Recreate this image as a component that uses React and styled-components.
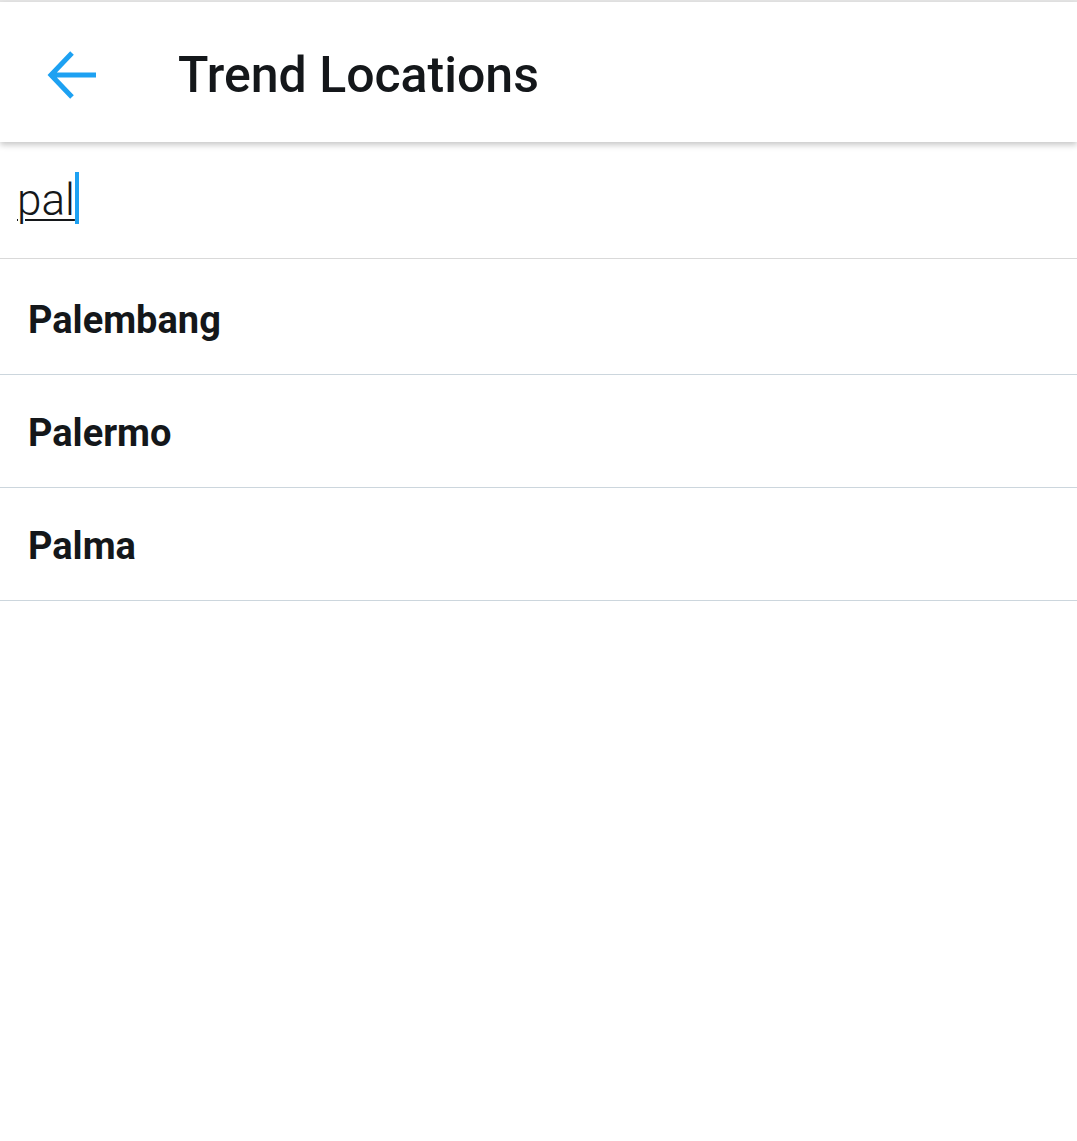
import React from 'react';
import styled, { createGlobalStyle } from 'styled-components';

const GlobalStyle = createGlobalStyle`
  html, body {
    margin: 0;
    padding: 0;
    background: #ffffff;
  }
  body {
    font-family: Roboto, "Noto Sans", "Liberation Sans", sans-serif;
    color: #14171a;
  }
`;

const Page = styled.div`
  width: 100%;
  min-height: 1141px;
  background: #fff;
  border-top: 2px solid #e6e6e6;
  box-sizing: border-box;
`;

const Header = styled.header`
  height: 140px;
  padding-top: 5px;
  box-sizing: border-box;
  display: flex;
  align-items: center;
  position: relative;
  z-index: 1;
  background: #fff;
  box-shadow: 0 3px 6px rgba(0, 0, 0, 0.22);
`;

const BackButton = styled.button`
  width: 178px;
  height: 100%;
  padding: 0 0 0 46px;
  border: 0;
  background: none;
  display: flex;
  align-items: center;
  justify-content: flex-start;
  cursor: pointer;
`;

const Title = styled.h1`
  margin: 0;
  font-size: 50px;
  font-weight: 500;
  letter-spacing: 0;
  color: #14171a;
`;

const SearchRow = styled.div`
  height: 117px;
  box-sizing: border-box;
  display: flex;
  align-items: center;
  padding: 0 17px;
  border-bottom: 1px solid #d9d9d9;
`;

const Query = styled.span`
  font-size: 44px;
  font-weight: 300;
  color: #14171a;
  text-decoration: underline;
  text-decoration-thickness: 2px;
  text-underline-offset: 4px;
  line-height: 1;
`;

const Caret = styled.span`
  display: inline-block;
  width: 4px;
  height: 52px;
  background: #1da1f2;
  margin-top: -4px;
`;

const List = styled.ul`
  list-style: none;
  margin: 0;
  padding: 3px 0 0;
`;

const Item = styled.li`
  height: 113px;
  box-sizing: border-box;
  display: flex;
  align-items: center;
  padding: 4px 28px 0;
  border-bottom: 1px solid #ccd6dd;
  font-size: 38px;
  font-weight: 700;
  color: #14171a;
`;

const locations = ['Palembang', 'Palermo', 'Palma'];

const BackArrow = () => (
  <svg width="54" height="54" viewBox="0 0 54 54" fill="none">
    <path
      d="M50 27H6M26 5L5 27l21 22"
      stroke="#1da1f2"
      strokeWidth="5"
      strokeLinecap="butt"
      strokeLinejoin="miter"
    />
  </svg>
);

export default function App() {
  return (
    <>
      <GlobalStyle />
      <Page>
        <Header>
          <BackButton aria-label="Back">
            <BackArrow />
          </BackButton>
          <Title>Trend Locations</Title>
        </Header>
        <SearchRow>
          <Query>pal</Query>
          <Caret />
        </SearchRow>
        <List>
          {locations.map((name) => (
            <Item key={name}>{name}</Item>
          ))}
        </List>
      </Page>
    </>
  );
}
